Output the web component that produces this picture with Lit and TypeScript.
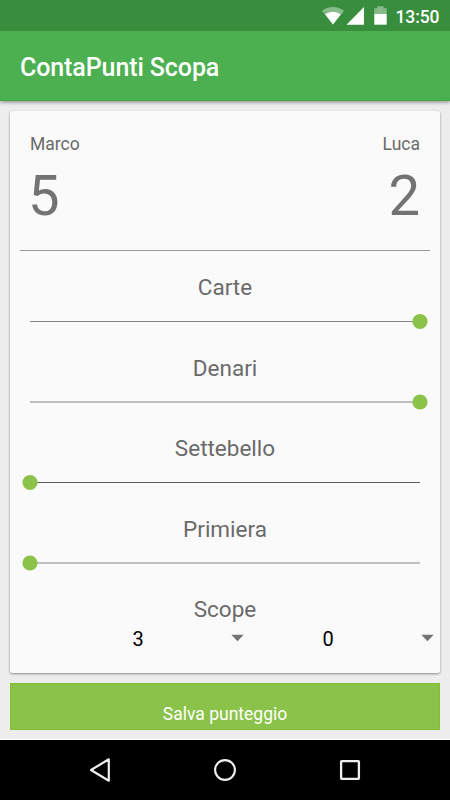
import { LitElement, html, css, svg } from "lit";
import { customElement, property } from "lit/decorators.js";

interface Category {
  name: string;
  side: "left" | "right";
  offset: number;
  stroke: string;
}

const categories: Category[] = [
  { name: "Carte", side: "right", offset: 8.5, stroke: "#858585" },
  { name: "Denari", side: "right", offset: 8, stroke: "#858585" },
  { name: "Settebello", side: "left", offset: 8.5, stroke: "#5e5e5e" },
  { name: "Primiera", side: "left", offset: 8, stroke: "#858585" },
];

@customElement("category-slider")
export class CategorySlider extends LitElement {
  @property({ attribute: false }) category!: Category;

  static styles = css`
    :host {
      display: flex;
      flex-direction: column;
    }
    .label {
      font-size: 22.5px;
      line-height: 26px;
      text-align: center;
      color: #6a6a6a;
    }
    .track {
      display: block;
      width: 410px;
      height: 17px;
      margin-top: 13px;
    }
  `;

  render() {
    const { name, side, offset, stroke } = this.category;
    return html`
      <div class="label">${name}</div>
      <svg class="track" viewBox="0 0 410 17">
        ${svg`<path d="M10 ${offset}H400" stroke=${stroke} stroke-width="1" />
        <circle cx=${side === "left" ? 10 : 400} cy=${offset} r="7.6" fill="#8bc34a" />`}
      </svg>
    `;
  }
}

@customElement("app-root")
export class AppRoot extends LitElement {
  static styles = css`
    :host {
      display: flex;
      flex-direction: column;
      width: 450px;
      height: 800px;
      overflow: hidden;
      background: #ededed;
      font-family: Roboto, "Liberation Sans", sans-serif;
    }
    .status {
      flex: none;
      position: relative;
      z-index: 2;
      display: flex;
      justify-content: flex-end;
      height: 31px;
      background: #388e3c;
      color: #fff;
    }
    .status-icons {
      width: 74px;
      height: 31px;
    }
    .clock {
      width: 54.5px;
      padding-left: 0.5px;
      font-size: 17.5px;
      font-weight: 500;
      letter-spacing: -0.1px;
      line-height: 34px;
    }
    .toolbar {
      flex: none;
      position: relative;
      box-sizing: border-box;
      height: 70px;
      padding-left: 20px;
      background: #4caf50;
      border-bottom: 1px solid #41ab46;
      box-shadow: 0 1px 4px rgba(0, 0, 0, 0.45);
      color: #fff;
      font-size: 25px;
      font-weight: 500;
      letter-spacing: -0.1px;
      line-height: 73px;
    }
    .content {
      flex: 1;
      display: flex;
      flex-direction: column;
      gap: 10px;
      padding: 10px 10px 0;
    }
    .card {
      box-sizing: border-box;
      height: 562px;
      padding: 0 10px;
      border-radius: 2.5px;
      background: #fafafa;
      box-shadow: 0 1px 2.5px rgba(0, 0, 0, 0.42);
    }
    .scores {
      display: flex;
      justify-content: space-between;
      box-sizing: border-box;
      height: 140px;
      padding: 22px 10px 0;
      border-bottom: 1px solid #999;
    }
    .player {
      display: flex;
      flex-direction: column;
      color: #6a6a6a;
    }
    .away {
      align-items: flex-end;
    }
    .name {
      font-size: 17.5px;
      line-height: 22px;
    }
    .points {
      color: #737373;
      font-size: 56.25px;
      line-height: 66px;
      margin-top: 8px;
    }
    .home .points {
      margin-left: -2px;
    }
    .categories {
      display: grid;
      grid-template-rows: 81px 80px 81px 80px;
      padding-top: 23px;
    }
    .scope-label {
      font-size: 22.5px;
      line-height: 26px;
      text-align: center;
      color: #6a6a6a;
    }
    .spinners {
      display: grid;
      grid-template-columns: 190px 190px;
      padding-left: 40px;
    }
    .spinner {
      display: grid;
      grid-template-columns: 156px 34px;
      align-items: center;
      height: 34px;
      color: #000;
      font-size: 20px;
      line-height: 34px;
      text-align: center;
    }
    .arrow {
      display: block;
      width: 14px;
      height: 8px;
      margin-left: 14px;
      margin-bottom: 2px;
    }
    .save {
      box-sizing: border-box;
      height: 47px;
      padding: 14px 0 0;
      border: 1px solid #82be30;
      border-radius: 0;
      background: #8bc34a;
      color: #fff;
      font: 17.5px/32px Roboto, "Liberation Sans", sans-serif;
      text-align: center;
    }
    .nav {
      flex: none;
      height: 60px;
      background: #000;
      border-top: 1px solid #fff;
      margin-top: -1px;
    }
    .nav-icons {
      display: block;
      width: 450px;
      height: 60px;
    }
  `;

  render() {
    return html`
      <header class="status">
        <svg class="status-icons" viewBox="321 0 74 31">
          <path d="M333 24.5 322 11a17.3 17.3 0 0 1 22 0Z" fill="#fff" opacity=".4" />
          <path d="M333 24.5 325.2 14.3a13 13 0 0 1 15.6 0Z" fill="#fff" />
          <path d="M346.5 24.7 364 7V24.7Z" fill="#fff" />
          <path d="M374.3 14V8.2h3V6.2h6.3V8.2h3.1V14Z" fill="#fff" opacity=".4" />
          <path d="M374.3 14h12.4v10.7H374.3Z" fill="#fff" />
        </svg>
        <span class="clock">13:50</span>
      </header>
      <div class="toolbar">ContaPunti Scopa</div>
      <main class="content">
        <section class="card">
          <div class="scores">
            <div class="player home">
              <span class="name">Marco</span>
              <span class="points">5</span>
            </div>
            <div class="player away">
              <span class="name">Luca</span>
              <span class="points">2</span>
            </div>
          </div>
          <div class="categories">
            ${categories.map(
              (c) => html`<category-slider .category=${c}></category-slider>`
            )}
          </div>
          <div class="scope-label">Scope</div>
          <div class="spinners">
            ${[3, 0].map(
              (n) => html`<div class="spinner">
                <span>${n}</span>
                <svg class="arrow" viewBox="0 0 14 8">
                  <path d="M1.3 .8H13.7L7.5 7.3Z" fill="#737373" />
                </svg>
              </div>`
            )}
          </div>
        </section>
        <button class="save">Salva punteggio</button>
      </main>
      <nav class="nav">
        <svg class="nav-icons" viewBox="0 0 450 60" fill="none" stroke="#eee">
          <path d="M108.8 19.3V40.7L91 30Z" stroke-width="2.2" stroke-linejoin="round" />
          <circle cx="225" cy="30" r="9.9" stroke-width="2.1" />
          <rect x="341.1" y="21.1" width="17.8" height="17.8" rx=".6" stroke-width="2.3" />
        </svg>
      </nav>
    `;
  }
}
